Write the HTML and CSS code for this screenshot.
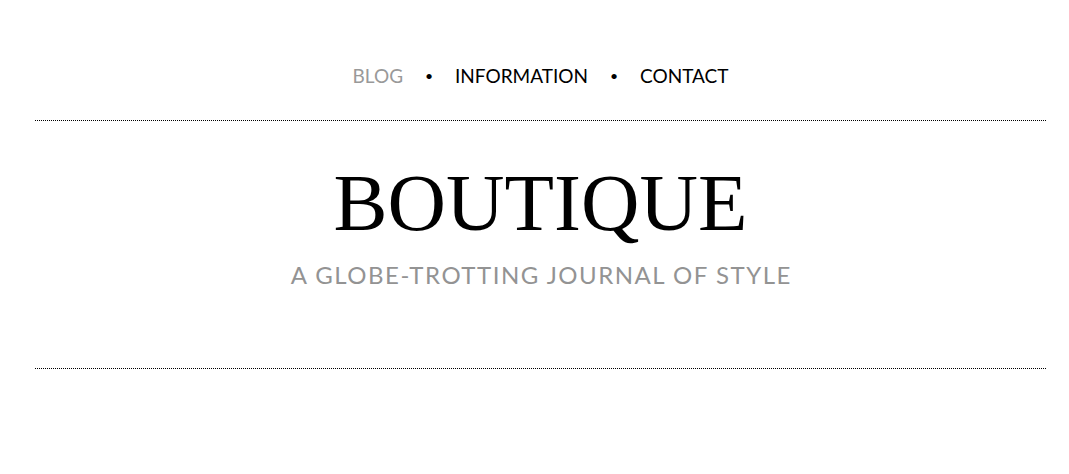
FILE: index.html
```html
<!DOCTYPE html>
<html>
<head>
<meta charset="utf-8">
<link rel="stylesheet" href="styles.css">
</head>
<body>
<div class="page">
  <nav class="nav">
    <a class="nav-link current" href="#">BLOG</a>
    <span class="sep">•</span>
    <a class="nav-link" href="#">INFORMATION</a>
    <span class="sep">•</span>
    <a class="nav-link" href="#">CONTACT</a>
  </nav>
  <header class="masthead">
    <h1 class="title">BOUTIQUE</h1>
    <p class="tagline">A GLOBE-TROTTING JOURNAL OF STYLE</p>
  </header>
</div>
</body>
</html>
```
FILE: styles.css
```css
html, body {
  margin: 0;
  padding: 0;
  background: #fff;
}
.page {
  margin-left: 35px;
  width: 1011px;
}
.nav {
  display: flex;
  justify-content: center;
  align-items: flex-start;
  height: 121px;
  box-sizing: border-box;
  padding-top: 62px;
  border-bottom: 1px dotted #000;
  font-family: "Lato", "Liberation Sans", sans-serif;
  font-size: 19px;
}
.nav-link {
  color: #000;
  text-decoration: none;
  line-height: 28px;
}
.nav-link.current {
  color: #999;
}
.sep {
  line-height: 28px;
  width: 52px;
  text-align: center;
  font-size: 14px;
}
.masthead {
  height: 247px;
  border-bottom: 1px dotted #000;
  text-align: center;
  display: flex;
  flex-direction: column;
  align-items: center;
}
.title {
  margin: 37px 0 0 0;
  font-family: "Liberation Serif", serif;
  font-weight: normal;
  font-size: 81px;
  line-height: 90px;
  color: #000;
}
.tagline {
  margin: 12px 0 0 0;
  padding-left: 1.5px;
  font-family: "Lato", "Liberation Sans", sans-serif;
  font-size: 24px;
  line-height: 30px;
  color: #939393;
  letter-spacing: 1.5px;
}
```
